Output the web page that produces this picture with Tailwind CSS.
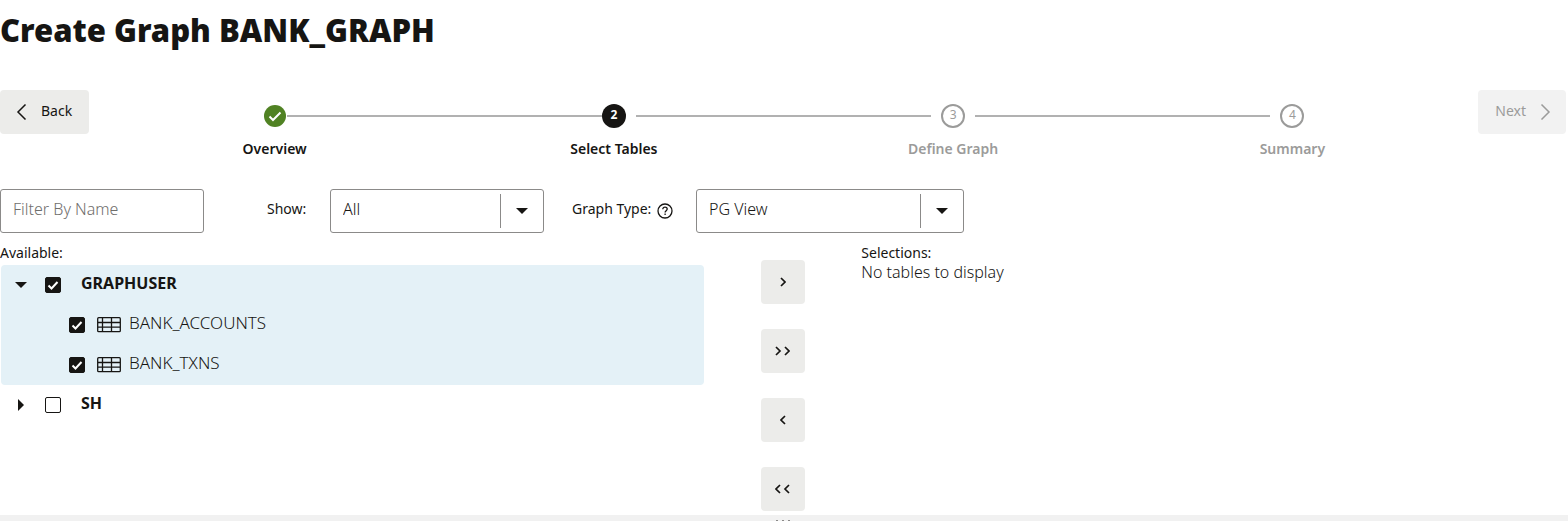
<!DOCTYPE html>
<html lang="en">
<head>
<meta charset="utf-8">
<meta name="viewport" content="width=device-width, initial-scale=1">
<title>Create Graph BANK_GRAPH</title>
<script src="https://cdn.jsdelivr.net/npm/@tailwindcss/browser@4"></script>
</head>
<body class="min-h-screen flex flex-col bg-white text-[#161513] font-['Noto_Sans',sans-serif] text-base">
<main class="flex-1">
  <h1 class="pt-2 text-[31px] leading-11 font-black">Create Graph BANK_GRAPH</h1>

  <nav class="mt-[38px] pr-[2px] flex items-start gap-4 text-sm" aria-label="Wizard">
    <button type="button" class="h-11 w-[89px] shrink-0 rounded bg-[#ececea] flex items-center gap-3 pl-[13px] pb-[2px]">
      <svg class="size-4 mt-[2px]" viewBox="0 0 16 16" fill="none" stroke="#161513" stroke-width="1.5"><path d="M12.5 0.5 5 8l7.500 7.500"/></svg>Back
    </button>
    <ol class="flex-1 grid grid-cols-4 pt-[14px] font-semibold leading-5">
      <li class="flex flex-col items-center gap-[11px]">
        <div class="w-full grid grid-cols-[1fr_24px_1fr] items-center">
          <span></span>
          <svg class="size-6" viewBox="0 0 24 24"><circle cx="12" cy="12" r="11" fill="#508223"/><path d="m6.500 12.500 3.500 3.500 7.500-7.500" fill="none" stroke="#fff" stroke-width="2"/></svg>
          <span class="h-[2px] bg-[#b1b1b1]"></span>
        </div>
        <a href="#overview">Overview</a>
      </li>
      <li class="flex flex-col items-center gap-[11px]" aria-current="step">
        <div class="w-full grid grid-cols-[1fr_24px_1fr] items-center">
          <span class="h-[2px] bg-[#b1b1b1]"></span>
          <span class="size-6 rounded-full bg-[#161513] text-white text-xs font-bold flex justify-center leading-[22px]">2</span>
          <span class="h-[2px] bg-[#b1b1b1] ml-[10px]"></span>
        </div>
        <a href="#tables">Select Tables</a>
      </li>
      <li class="flex flex-col items-center gap-[11px] text-[#9b9b9a]">
        <div class="w-full grid grid-cols-[1fr_24px_1fr] items-center">
          <span class="h-[2px] bg-[#b1b1b1] mr-[10px]"></span>
          <span class="size-6 rounded-full border-2 border-[#9b9b9a] text-xs font-normal flex justify-center leading-[18px]">3</span>
          <span class="h-[2px] bg-[#b1b1b1] ml-[10px]"></span>
        </div>
        <span>Define Graph</span>
      </li>
      <li class="flex flex-col items-center gap-[11px] text-[#9b9b9a]">
        <div class="w-full grid grid-cols-[1fr_24px_1fr] items-center">
          <span class="h-[2px] bg-[#b1b1b1] mr-[10px]"></span>
          <span class="size-6 rounded-full border-2 border-[#9b9b9a] text-xs font-normal flex justify-center leading-[18px]">4</span>
          <span></span>
        </div>
        <span>Summary</span>
      </li>
    </ol>
    <button type="button" disabled class="h-11 w-[88px] shrink-0 rounded bg-[#f2f2f2] flex items-center justify-end gap-3 pr-3 pb-[2px] text-[#9b9b9a]">
      Next<svg class="size-4 mt-[2px]" viewBox="0 0 16 16" fill="none" stroke="#9b9b9a" stroke-width="1.500"><path d="M3.500 0.500 11 8l-7.500 7.500"/></svg>
    </button>
  </nav>

  <form class="mt-[30px] flex items-center">
    <input type="text" aria-label="Filter By Name" placeholder="Filter By Name" class="h-11 w-[204px] rounded-[3px] border border-[#8b8a89] px-3 pb-1 font-light placeholder:text-[#6f6e6c]">
    <label for="show" class="ml-[63px] w-[63px] pb-1 text-sm">Show:</label>
    <div class="relative w-[214px]">
      <select id="show" class="appearance-none h-11 w-full rounded-[3px] border border-[#8b8a89] bg-white px-3 pb-1 font-light"><option>All</option></select>
      <span class="pointer-events-none absolute inset-y-[5px] right-[1px] w-[43px] border-l border-[#8b8a89] flex items-center justify-center"><svg class="w-3 h-[6px]" viewBox="0 0 12 6"><path d="M0 0h12L6 6z" fill="#161513"/></svg></span>
    </div>
    <div class="ml-7 w-[124px] flex items-center gap-[6px]">
      <label for="type" class="pb-1 text-sm">Graph Type:</label>
      <svg class="size-4" viewBox="0 0 16 16" fill="none" stroke="#161513" stroke-width="1.300"><circle cx="8" cy="8" r="7"/><path d="M5.800 6.300c0-1.300.9-2.100 2.200-2.100s2.200.8 2.200 1.900c0 1.500-2.100 1.600-2.100 3.300M8.100 10.600v1.400"/></svg>
    </div>
    <div class="relative w-[268px]">
      <select id="type" class="appearance-none h-11 w-full rounded-[3px] border border-[#8b8a89] bg-white px-3 pb-1 font-light"><option>PG View</option></select>
      <span class="pointer-events-none absolute inset-y-[5px] right-[1px] w-[43px] border-l border-[#8b8a89] flex items-center justify-center"><svg class="w-3 h-[6px]" viewBox="0 0 12 6"><path d="M0 0h12L6 6z" fill="#161513"/></svg></span>
    </div>
  </form>

  <div class="mt-[10px] pr-[2px] grid grid-cols-[45fr_10fr_45fr]">
    <section>
      <h2 class="text-sm leading-5">Available:</h2>
      <ul class="mt-[2px] px-[1px]">
        <li class="rounded bg-[#e4f1f7]">
          <div class="h-10 flex items-center">
            <button type="button" aria-label="Collapse GRAPHUSER" class="w-11 pl-[14px]"><svg class="w-3 h-[6px]" viewBox="0 0 12 6"><path d="M0 0h12L6 6z" fill="#161513"/></svg></button>
            <label class="flex items-center font-bold">
              <span class="grid mr-5"><input type="checkbox" checked class="peer col-start-1 row-start-1 appearance-none size-4 rounded-[2px] border border-[#161513] checked:bg-[#161513]"><svg class="col-start-1 row-start-1 size-4 pointer-events-none invisible peer-checked:visible" viewBox="0 0 16 16"><path d="m3.500 8.500 3 3 6-6.500" fill="none" stroke="#fff" stroke-width="2"/></svg></span>
              <span class="pb-1">GRAPHUSER</span>
            </label>
          </div>
          <ul class="text-[17px] font-light">
            <li class="h-10 flex items-center pl-[68px]">
              <label class="flex items-center">
                <span class="grid mr-3"><input type="checkbox" checked class="peer col-start-1 row-start-1 appearance-none size-4 rounded-[2px] border border-[#161513] checked:bg-[#161513]"><svg class="col-start-1 row-start-1 size-4 pointer-events-none invisible peer-checked:visible" viewBox="0 0 16 16"><path d="m3.500 8.500 3 3 6-6.500" fill="none" stroke="#fff" stroke-width="2"/></svg></span>
                <svg class="w-6 h-4 mr-2" viewBox="0 0 24 16" fill="none" stroke="#161513" stroke-width="1.300"><rect x=".7" y=".7" width="22.600" height="14" rx="1"/><path d="M1 5.500h22M1 10.200h22M5.500 1v13.500M14.500 1v13.500"/></svg>
                <span class="pb-1">BANK_ACCOUNTS</span>
              </label>
            </li>
            <li class="h-10 flex items-center pl-[68px]">
              <label class="flex items-center">
                <span class="grid mr-3"><input type="checkbox" checked class="peer col-start-1 row-start-1 appearance-none size-4 rounded-[2px] border border-[#161513] checked:bg-[#161513]"><svg class="col-start-1 row-start-1 size-4 pointer-events-none invisible peer-checked:visible" viewBox="0 0 16 16"><path d="m3.500 8.500 3 3 6-6.500" fill="none" stroke="#fff" stroke-width="2"/></svg></span>
                <svg class="w-6 h-4 mr-2" viewBox="0 0 24 16" fill="none" stroke="#161513" stroke-width="1.300"><rect x=".7" y=".7" width="22.600" height="14" rx="1"/><path d="M1 5.500h22M1 10.200h22M5.500 1v13.500M14.500 1v13.500"/></svg>
                <span class="pb-1">BANK_TXNS</span>
              </label>
            </li>
          </ul>
        </li>
        <li class="h-10 flex items-center">
          <button type="button" aria-label="Expand SH" class="w-11 pl-[17px]"><svg class="w-[6px] h-3" viewBox="0 0 6 12"><path d="M0 0v12l6-6z" fill="#161513"/></svg></button>
          <label class="flex items-center font-bold">
            <span class="grid mr-5"><input type="checkbox" class="peer col-start-1 row-start-1 appearance-none size-4 rounded-[2px] border border-[#161513] bg-white checked:bg-[#161513]"><svg class="col-start-1 row-start-1 size-4 pointer-events-none invisible peer-checked:visible" viewBox="0 0 16 16"><path d="m3.500 8.500 3 3 6-6.500" fill="none" stroke="#fff" stroke-width="2"/></svg></span>
            <span class="pb-1">SH</span>
          </label>
        </li>
      </ul>
    </section>

    <div class="pt-[17px] pb-1 flex flex-col items-center gap-[25px]">
      <button type="button" aria-label="Add selected" class="size-11 rounded bg-[#ececea] flex items-center justify-center"><svg class="w-[6px] h-[10px]" viewBox="0 0 6 10" fill="none" stroke="#161513" stroke-width="1.700"><path d="m1 1 4 4-4 4"/></svg></button>
      <button type="button" aria-label="Add all" class="size-11 rounded bg-[#ececea] flex items-center justify-center"><svg class="w-[15px] h-[10px]" viewBox="0 0 15 10" fill="none" stroke="#161513" stroke-width="1.700"><path d="m1 1 4 4-4 4M10 1l4 4-4 4"/></svg></button>
      <button type="button" aria-label="Remove selected" class="size-11 rounded bg-[#ececea] flex items-center justify-center"><svg class="w-[6px] h-[10px]" viewBox="0 0 6 10" fill="none" stroke="#161513" stroke-width="1.700"><path d="M5 1 1 5l4 4"/></svg></button>
      <button type="button" aria-label="Remove all" class="size-11 rounded bg-[#ececea] flex items-center justify-center"><svg class="w-[15px] h-[10px]" viewBox="0 0 15 10" fill="none" stroke="#161513" stroke-width="1.700"><path d="M5 1 1 5l4 4M14 1l-4 4 4 4"/></svg></button>
    </div>

    <section>
      <h2 class="text-sm leading-5">Selections:</h2>
      <p class="leading-[18px] font-light">No tables to display</p>
    </section>
  </div>
</main>
<div role="separator" class="h-[6px] pr-[2px] bg-[#f1f1f1] flex items-end justify-center gap-1">
  <span class="w-[2px] h-px bg-[#8b8a89]"></span><span class="w-[2px] h-px bg-[#8b8a89]"></span><span class="w-[2px] h-px bg-[#8b8a89]"></span>
</div>
</body>
</html>
